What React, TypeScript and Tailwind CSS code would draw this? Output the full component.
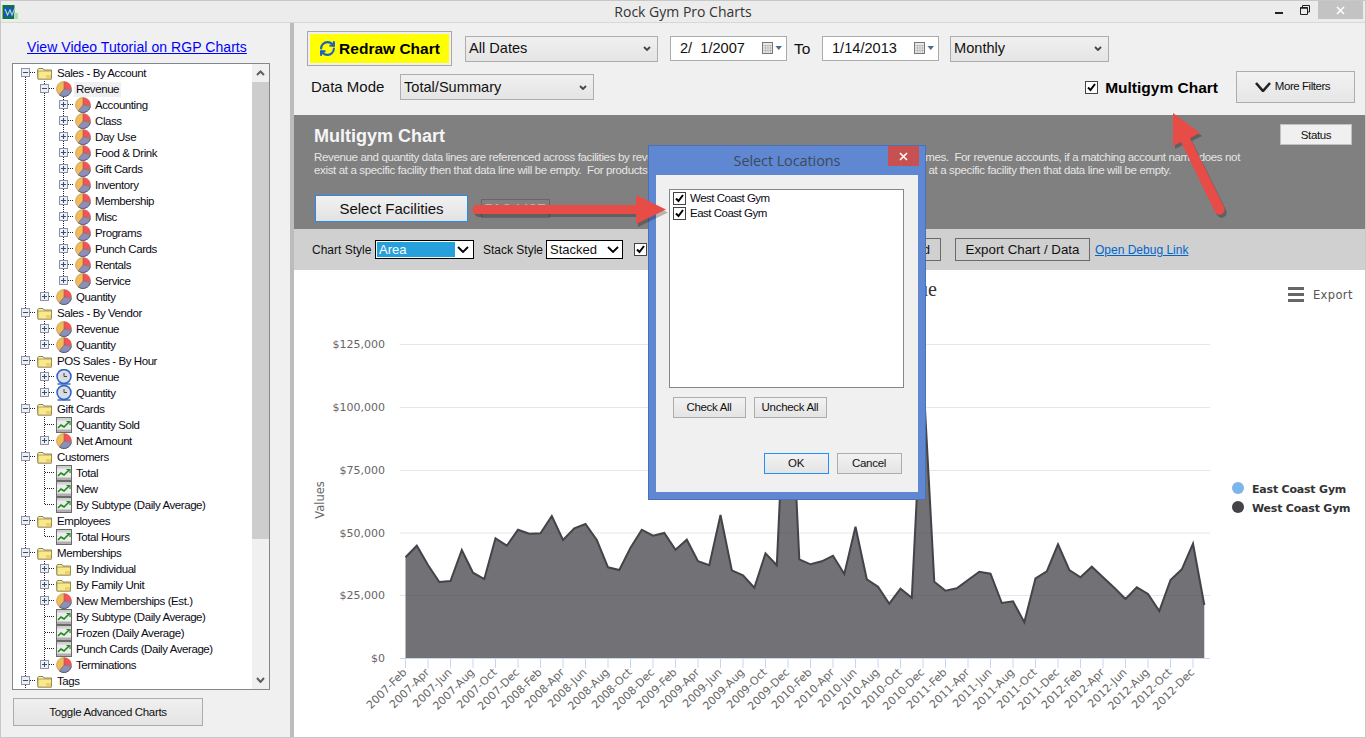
import React from "react";
import { RefreshCw } from "lucide-react";

const SANS = "font-['Liberation_Sans',Arial,sans-serif]";

type Kind = "folder" | "pie" | "clock" | "chart";
type Row = { d: number; k: Kind; t: string; e?: "+" | "-"; sel?: boolean };

const level2 = ["Accounting", "Class", "Day Use", "Food & Drink", "Gift Cards", "Inventory", "Membership", "Misc", "Programs", "Punch Cards", "Rentals", "Service"];

const rows: Row[] = [
  { d: 0, k: "folder", t: "Sales - By Account", e: "-" },
  { d: 1, k: "pie", t: "Revenue", e: "-", sel: true },
  ...level2.map((t): Row => ({ d: 2, k: "pie", t, e: "+" })),
  { d: 1, k: "pie", t: "Quantity", e: "+" },
  { d: 0, k: "folder", t: "Sales - By Vendor", e: "-" },
  { d: 1, k: "pie", t: "Revenue", e: "+" },
  { d: 1, k: "pie", t: "Quantity", e: "+" },
  { d: 0, k: "folder", t: "POS Sales - By Hour", e: "-" },
  { d: 1, k: "clock", t: "Revenue", e: "+" },
  { d: 1, k: "clock", t: "Quantity", e: "+" },
  { d: 0, k: "folder", t: "Gift Cards", e: "-" },
  { d: 1, k: "chart", t: "Quantity Sold" },
  { d: 1, k: "pie", t: "Net Amount", e: "+" },
  { d: 0, k: "folder", t: "Customers", e: "-" },
  { d: 1, k: "chart", t: "Total" },
  { d: 1, k: "chart", t: "New" },
  { d: 1, k: "chart", t: "By Subtype (Daily Average)" },
  { d: 0, k: "folder", t: "Employees", e: "-" },
  { d: 1, k: "chart", t: "Total Hours" },
  { d: 0, k: "folder", t: "Memberships", e: "-" },
  { d: 1, k: "folder", t: "By Individual", e: "+" },
  { d: 1, k: "folder", t: "By Family Unit", e: "+" },
  { d: 1, k: "pie", t: "New Memberships (Est.)", e: "+" },
  { d: 1, k: "chart", t: "By Subtype (Daily Average)" },
  { d: 1, k: "chart", t: "Frozen (Daily Average)" },
  { d: 1, k: "chart", t: "Punch Cards (Daily Average)" },
  { d: 1, k: "pie", t: "Terminations", e: "+" },
  { d: 0, k: "folder", t: "Tags", e: "-" },
];

function hasLater(i: number, level: number) {
  if (level === 0) return true;
  for (let j = i + 1; j < rows.length; j++) {
    if (rows[j].d < level) return false;
    if (rows[j].d === level) return true;
  }
  return false;
}

function Guide({ vTop, vBottom, h, e }: { vTop: boolean; vBottom: boolean; h?: boolean; e?: "+" | "-" }) {
  return (
    <svg width="19" height="16" className="shrink-0 block">
      {vTop && <line x1="9.5" y1="0" x2="9.5" y2="8" stroke="#222" strokeDasharray="1 1" />}
      {vBottom && <line x1="9.5" y1="8" x2="9.5" y2="16" stroke="#222" strokeDasharray="1 1" />}
      {h && <line x1="10" y1="7.5" x2="21" y2="7.5" stroke="#222" strokeDasharray="1 1" />}
      {e && (
        <g>
          <rect x="5.5" y="3.5" width="8" height="8" fill="#eef0f5" stroke="#8a94a6" />
          <line x1="7" y1="7.5" x2="12" y2="7.5" stroke="#3b4a7a" />
          {e === "+" && <line x1="9.5" y1="5" x2="9.5" y2="10" stroke="#3b4a7a" />}
        </g>
      )}
    </svg>
  );
}

function TreeIcon({ k }: { k: Kind }) {
  if (k === "pie")
    return (
      <svg width="16" height="16" viewBox="0 0 16 16" className="shrink-0 block">
        <circle cx="8" cy="8" r="7.5" fill="#f4bc58" stroke="#9a7a3a" strokeWidth="0.5" />
        <path d="M8 8 L8 0.5 A7.5 7.5 0 0 1 15.5 9 Z" fill="#f2545c" />
        <path d="M8 8 L15.5 9 A7.5 7.5 0 0 1 3.2 13.8 Z" fill="#8a90bc" />
        <path d="M15.3 9.5 A7.5 7.5 0 0 1 3.2 13.8" fill="none" stroke="#50506a" strokeWidth="0.9" />
        <path d="M8 1 V8 L15 9 M8 8 L3.4 13.6" stroke="#7a5a40" strokeWidth="0.5" fill="none" />
      </svg>
    );
  if (k === "folder")
    return (
      <svg width="16" height="16" viewBox="0 0 16 16" className="shrink-0 block">
        <path d="M0.5 5 L1.5 3.5 H6 L7 5 H14.5 V14 H1 Z" fill="#fbf4a0" stroke="#6f6a3c" strokeWidth="0.8" />
        <rect x="1" y="6" width="13.5" height="8" fill="#f9e98a" stroke="#7d7440" strokeWidth="0.6" />
        <rect x="9" y="10" width="5" height="4" fill="#e8c060" opacity="0.6" />
      </svg>
    );
  if (k === "clock")
    return (
      <svg width="16" height="16" viewBox="0 0 16 16" className="shrink-0 block">
        <path d="M1.5 15 H14.5" stroke="#2a62c8" strokeWidth="1.4" />
        <circle cx="8" cy="7.5" r="7" fill="#c9ced8" stroke="#2a62c8" strokeWidth="1.5" />
        <circle cx="8" cy="7.5" r="5" fill="#d8dce2" stroke="#eef0f4" strokeWidth="0.6" />
        <path d="M8 4 V7.5 H11" stroke="#444" strokeWidth="1" fill="none" />
      </svg>
    );
  return (
    <svg width="16" height="16" viewBox="0 0 16 16" className="shrink-0 block">
      <rect x="0.5" y="0.5" width="15" height="15" fill="#ececec" stroke="#6a6a6a" />
      <rect x="1" y="1" width="14" height="2.5" fill="#cfcfcf" />
      <path d="M2 11 L5 8 L8 10 L13 5" stroke="#1c8a1c" strokeWidth="1.6" fill="none" />
      <path d="M10.5 4.5 H14 V8" stroke="#1c8a1c" strokeWidth="1.2" fill="none" />
      <rect x="1" y="12.5" width="14" height="2.5" fill="#b0b0b0" />
    </svg>
  );
}

function TreeRow({ r, i }: { r: Row; i: number }) {
  const guides = [];
  for (let l = 0; l < r.d; l++) {
    const on = hasLater(i, l);
    guides.push(<Guide key={l} vTop={on} vBottom={on} />);
  }
  return (
    <div className="flex items-center h-4 shrink-0">
      {guides}
      <Guide vTop={i > 0} vBottom={hasLater(i, r.d)} h e={r.e} />
      <div className="w-[2px] shrink-0" />
      <TreeIcon k={r.k} />
      <span className={`ml-[2px] px-[2px] h-[15px] leading-[15px] whitespace-nowrap text-[11.5px] text-[#0a0a14] tracking-[-0.42px] ${r.sel ? "bg-[#f0f0f0]" : ""}`}>{r.t}</span>
    </div>
  );
}

function Chevron({ w = 8, h = 5, sw = 1.8, c = "#444" }: { w?: number; h?: number; sw?: number; c?: string }) {
  return (
    <svg width={w} height={h} viewBox={`0 0 ${w} ${h}`} className="block shrink-0">
      <polyline points={`1,1 ${w / 2},${h - 1} ${w - 1},1`} fill="none" stroke={c} strokeWidth={sw} />
    </svg>
  );
}

function WinSelect({ label, className }: { label: string; className: string }) {
  return (
    <div className={`flex items-center justify-between h-[26px] pl-[3px] pr-[6px] border border-[#adadad] bg-linear-to-b from-[#f0f0f0] to-[#e4e4e4] text-[14.6px] text-[#111] shrink-0 ${className}`}>
      <span className="pt-[1px]">{label}</span>
      <Chevron />
    </div>
  );
}

function DateBox({ label }: { label: string }) {
  return (
    <div className="flex items-center justify-between w-[117px] h-[25px] pl-[9px] pr-[3px] border border-[#ababab] bg-white text-[14.6px] text-[#111] shrink-0 whitespace-pre">
      <span className="pt-[1px]">{label}</span>
      <svg width="21" height="13" viewBox="0 0 21 13" className="block shrink-0">
        <rect x="0.5" y="0.5" width="10" height="11" fill="#e8e8e8" stroke="#777" />
        <path d="M1 3.5H10M1 6H10M1 8.5H10M3.5 3V11M6 3V11M8.5 3V11" stroke="#aaa" strokeWidth="0.6" />
        <path d="M13.5 4 H20 L16.75 8 Z" fill="#4a6a96" />
      </svg>
    </div>
  );
}

function Check({ className = "" }: { className?: string }) {
  return (
    <div className={`w-[13px] h-[13px] border border-[#444] bg-white flex items-center justify-center shrink-0 ${className}`}>
      <svg width="11" height="11" viewBox="0 0 11 11" className="block">
        <path d="M2 5.5 L4.5 8 L9 2" fill="none" stroke="#000" strokeWidth="2" />
      </svg>
    </div>
  );
}

function SmallBtn({ label, className }: { label: string; className: string }) {
  return (
    <div className={`flex items-center justify-center h-[21px] pt-[1px] pr-[1px] border border-[#adadad] bg-linear-to-b from-[#f2f2f2] to-[#e4e4e4] text-[11.5px] text-[#111] tracking-[-0.3px] shrink-0 ${className}`}>
      {label}
    </div>
  );
}

const ys = [557.3, 545.7, 565, 582, 581, 550, 572.7, 579, 538.3, 545.7, 529.7, 533.7, 533.3, 516, 540, 528.3, 524, 540, 567.3, 570, 547.7, 529.7, 535.7, 533, 549.7, 539.7, 561.3, 565.3, 515, 570.3, 575.3, 587.7, 553.3, 565.3, 320, 559.3, 564.3, 561.3, 555.7, 574, 526.7, 579.3, 586.7, 603.7, 588.7, 597.7, 372, 581.7, 590.7, 588.3, 580, 571.7, 573.7, 603, 601.3, 622.3, 578.3, 571.3, 544.3, 570, 577.3, 566.7, 577.3, 587.7, 599, 587.3, 594, 611, 580, 569.3, 543.7, 605];

const xAt = (i: number) => 405.5 + i * 11.25;
const linePts = ys.map((y, i) => `${xAt(i).toFixed(1)},${y}`).join(" ");
const yearsLabels: string[] = [];
for (let y = 2007; y <= 2012; y++) for (const m of ["Feb", "Apr", "Jun", "Aug", "Oct", "Dec"]) yearsLabels.push(`${y}-${m}`);
const grid = [
  { y: 344, t: "$125,000" },
  { y: 407, t: "$100,000" },
  { y: 470, t: "$75,000" },
  { y: 532.5, t: "$50,000" },
  { y: 595, t: "$25,000" },
];
const CHART_FONT = "'DejaVu Sans', sans-serif";

function Chart() {
  return (
    <svg viewBox="294 270 1071 467" className="w-[1071px] h-[467px] block" fontFamily={CHART_FONT}>
      <text x="937" y="296" textAnchor="end" fontSize="20" fill="#333" fontFamily="'Liberation Serif', serif">Revenue</text>
      {grid.map((g) => (
        <g key={g.t}>
          <line x1="400" x2="1210" y1={g.y + 0.5} y2={g.y + 0.5} stroke="#e6e6e6" />
          <text x="385" y={g.y + 4} textAnchor="end" fontSize="11" fill="#666">{g.t}</text>
        </g>
      ))}
      <text x="385" y="662" textAnchor="end" fontSize="11" fill="#666">$0</text>
      <text transform="translate(324 500) rotate(-90)" textAnchor="middle" fontSize="11.5" fill="#666">Values</text>
      <polygon points={`405.5,658 ${linePts} ${xAt(71)},658`} fill="#434348" fillOpacity="0.75" />
      <polyline points={linePts} fill="none" stroke="#434348" strokeWidth="2" />
      <line x1="400" x2="1210" y1="658.5" y2="658.5" stroke="#ccd6eb" />
      {yearsLabels.map((l, i) => {
        const x = xAt(i * 2);
        return (
          <g key={l}>
            <line x1={x} x2={x} y1="658" y2="668" stroke="#ccd6eb" />
            <text transform={`translate(${x + 2} 673) rotate(-45)`} textAnchor="end" fontSize="11" fill="#666">{l}</text>
          </g>
        );
      })}
      <path d="M1288 288.5H1304M1288 294.5H1304M1288 300.5H1304" stroke="#666" strokeWidth="3" />
      <text x="1313" y="299" fontSize="11.5" fill="#555" letterSpacing="0.35">Export</text>
      <circle cx="1238" cy="488" r="6" fill="#7cb5ec" />
      <text x="1252" y="493" fontSize="11" fontWeight="bold" fill="#333" letterSpacing="-0.2">East Coast Gym</text>
      <circle cx="1238" cy="507" r="6" fill="#434348" />
      <text x="1252" y="512" fontSize="11" fontWeight="bold" fill="#333" letterSpacing="-0.2">West Coast Gym</text>
    </svg>
  );
}

function Dialog() {
  return (
    <div className="absolute left-[647px] top-[144px] w-[278px] h-[355px] bg-[#5f87d2] border border-[#4a70b8] flex flex-col px-[7px] pb-[7px]">
      <div className="h-[29px] flex items-start justify-center relative shrink-0">
        <span className="text-[14.5px] leading-[29px] text-[#3c4a60] font-['Open_Sans',sans-serif] tracking-[-0.1px]">Select Locations</span>
        <div className="absolute right-[-1px] top-0 w-[31px] h-[20px] bg-[#c75050] flex items-center justify-center">
          <svg width="9" height="9" viewBox="0 0 9 9" className="block">
            <path d="M1 1L8 8M8 1L1 8" stroke="#fff" strokeWidth="1.6" />
          </svg>
        </div>
      </div>
      <div className="flex-1 bg-[#f0f0f0] flex flex-col pt-[14px] pl-[13px] pr-[14px]">
        <div className="w-[235px] h-[199px] border border-[#828790] bg-white pt-[1px] pl-[3px] shrink-0">
          {["West Coast Gym", "East Coast Gym"].map((t) => (
            <div key={t} className="flex items-center h-[15px]">
              <Check />
              <span className="ml-[4px] text-[11.5px] text-[#0a0a14] tracking-[-0.5px] whitespace-nowrap">{t}</span>
            </div>
          ))}
        </div>
        <div className="flex gap-[8px] mt-[9px] ml-[4px]">
          <SmallBtn label="Check All" className="w-[73px]" />
          <SmallBtn label="Uncheck All" className="w-[73px]" />
        </div>
        <div className="flex gap-[8px] mt-[35px] ml-[95px]">
          <SmallBtn label="OK" className="w-[65px] !border-[#1e90ff]" />
          <SmallBtn label="Cancel" className="w-[65px]" />
        </div>
      </div>
    </div>
  );
}

function Arrows() {
  return (
    <svg viewBox="0 0 1366 738" className="absolute left-[-1px] top-[-1px] w-[1366px] h-[738px] pointer-events-none">
      <g opacity="0.25" transform="translate(2 3)" fill="#000">
        <path d="M477 205 H636 V195 L666 209.5 L636 224 V214 H477 A4.5 4.5 0 0 1 477 205 Z" />
        <path d="M1173 113 L1200 133 L1190 138 L1224 207 A5 5 0 0 1 1215 212 L1181 142 L1173 146 Z" />
      </g>
      <path d="M477 205 H636 V195 L666 209.5 L636 224 V214 H477 A4.5 4.5 0 0 1 477 205 Z" fill="#e84c46" />
      <path d="M1173 113 L1200 133 L1190 138 L1224 207 A5 5 0 0 1 1215 212 L1181 142 L1173 146 Z" fill="#e84c46" />
    </svg>
  );
}

export default function App() {
  return (
    <div className={`relative w-[1366px] h-[738px] overflow-hidden border border-[#c8c8c8] bg-[#f0f0f0] flex flex-col ${SANS}`}>
      <div className="h-[22px] shrink-0 bg-[#ececec] border-b border-[#d8d8d8] flex items-center relative">
        <svg width="16" height="16" viewBox="0 0 16 16" className="block ml-[1px] shrink-0">
          <rect x="0.5" y="1" width="12" height="14" fill="#0a7a2a" />
          <rect x="2" y="3" width="10" height="10" fill="#1a50c8" />
          <path d="M3 5 L5.5 11 L8 6 L10 11 L13 4" stroke="#9fe0a0" strokeWidth="1.2" fill="none" />
          <rect x="12" y="9" width="4" height="6" fill="#a8e0a8" />
        </svg>
        <div className="flex-1 text-center text-[14px] text-[#333] font-['Open_Sans',sans-serif] pr-[17px]">Rock Gym Pro Charts</div>
        <div className="absolute right-0 top-0 flex items-start">
          <div className="w-[26px] h-[18px] flex items-center justify-center">
            <div className="w-[8px] h-[2px] bg-[#222] mt-[5px]" />
          </div>
          <div className="w-[26px] h-[18px] flex items-center justify-center">
            <svg width="10" height="10" viewBox="0 0 10 10" className="block">
              <path d="M2.5 2.5V0.5H9.5V7H7.5M0.5 2.5H7.5V9.5H0.5Z" fill="none" stroke="#222" />
              <path d="M0.5 3H7.5" stroke="#222" strokeWidth="1.5" />
            </svg>
          </div>
          <div className="w-[45px] h-[18px] bg-[#c3c3c3] flex items-center justify-center mr-[2px]">
            <svg width="9" height="9" viewBox="0 0 9 9" className="block">
              <path d="M1 1L8 8M8 1L1 8" stroke="#fff" strokeWidth="1.6" />
            </svg>
          </div>
        </div>
      </div>

      <div className="flex-1 flex min-h-0">
        <aside className="w-[289px] shrink-0 flex flex-col pl-[11px]">
          <a className="mt-[15px] ml-[15px] h-[18px] leading-[18px] text-[14px] text-[#0000ff] underline whitespace-nowrap tracking-[0.06px]">View Video Tutorial on RGP Charts</a>
          <div className="mt-[7px] w-[258px] h-[627px] border border-[#828790] bg-white flex shrink-0 overflow-hidden">
            <div className="flex-1 pl-[3px] pt-[1px] flex flex-col overflow-hidden">
              {rows.map((r, i) => (
                <TreeRow key={i} r={r} i={i} />
              ))}
            </div>
            <div className="w-[17px] shrink-0 bg-[#f0f0f0] flex flex-col items-center">
              <div className="h-[18px] flex items-center justify-center"><svg width="9" height="6" viewBox="0 0 9 6" className="block"><polyline points="1,5 4.5,1.5 8,5" fill="none" stroke="#606060" strokeWidth="2" /></svg></div>
              <div className="w-full h-[457px] bg-[#cdcdcd]" />
              <div className="flex-1" />
              <div className="h-[18px] flex items-center justify-center"><Chevron w={9} h={6} sw={2} c="#606060" /></div>
            </div>
          </div>
          <div className="mt-[8px] ml-[1px] w-[190px] h-[28px] pt-[1px] border border-[#adadad] bg-linear-to-b from-[#f0f0f0] to-[#e4e4e4] flex items-center justify-center text-[11.5px] text-[#111] tracking-[-0.33px]">Toggle Advanced Charts</div>
        </aside>

        <div className="w-[4px] shrink-0 bg-[#bcbcbc]" />

        <main className="flex-1 flex flex-col min-w-0">
          <section className="h-[92px] shrink-0 pt-[8px] pl-[13px] pr-[10px] flex flex-col">
            <div className="flex items-center h-[35px]">
              <div className="w-[145px] h-[35px] border border-[#a8a8a8] p-[2px] shrink-0">
                <div className="w-full h-full bg-[#ffff00] flex items-center justify-center gap-[3px] text-[15.5px] font-bold text-black">
                  <RefreshCw size={17} strokeWidth={3} color="#1f5fc0" className="shrink-0" />
                  <span>Redraw Chart</span>
                </div>
              </div>
              <WinSelect label="All Dates" className="w-[193px] ml-[13px]" />
              <div className="ml-[12px]"><DateBox label="2/  1/2007" /></div>
              <span className="ml-[7px] w-[18px] text-[15.5px] text-[#111] pt-[1px]">To</span>
              <div className="ml-[10px]"><DateBox label="1/14/2013" /></div>
              <WinSelect label="Monthly" className="w-[159px] ml-[11px]" />
            </div>
            <div className="flex items-center h-[32px] mt-[5px]">
              <span className="ml-[4px] w-[89px] text-[15px] text-[#111] pt-[1px]">Data Mode</span>
              <WinSelect label="Total/Summary" className="w-[194px]" />
              <div className="flex-1" />
              <Check />
              <span className="ml-[7px] text-[15.5px] font-bold text-black pt-[1px]">Multigym Chart</span>
              <div className="ml-[18px] w-[119px] h-[32px] border border-[#adadad] bg-linear-to-b from-[#f2f2f2] to-[#e6e6e6] flex items-center justify-center gap-[4px] text-[11.5px] text-[#111] tracking-[-0.45px] pr-[6px]">
                <Chevron w={16} h={10} sw={2.6} c="#222" />
                <span>More Filters</span>
              </div>
            </div>
          </section>

          <section className="h-[114px] shrink-0 bg-[#808080] pt-[9px] pl-[20px] pr-[13px] flex flex-col">
            <div className="flex items-start justify-between">
              <span className="h-[22px] leading-[24px] text-[18px] font-bold text-[#f5f5f5]">Multigym Chart</span>
              <div className="w-[72px] h-[21px] bg-[#f0f0f0] border border-[#c0c0c0] flex items-center justify-center text-[11.5px] text-[#111] tracking-[-0.35px] pt-[2px]">Status</div>
            </div>
            <div className="mt-[5px] text-[11.5px] leading-[13px] text-[#e6e6e6] tracking-[-0.35px]">
              <div className="w-[926px] flex justify-between whitespace-pre">
                <span>Revenue and quantity data lines are referenced across facilities by revenue</span>
                <span>names.  For revenue accounts, if a matching account name does not</span>
              </div>
              <div className="w-[857px] flex justify-between whitespace-pre">
                <span>exist at a specific facility then that data line will be empty.  For products, if a</span>
                <span>at a specific facility then that data line will be empty.</span>
              </div>
            </div>
            <div className="flex items-center mt-[18px] ml-[1px]">
              <div className="w-[153px] h-[27px] pt-[1px] border border-[#2a8ae8] bg-linear-to-b from-[#f2f2f2] to-[#e2e2e2] flex items-center justify-center text-[15px] text-[#111]">Select Facilities</div>
              <div className="ml-[13px] w-[69px] h-[19px] border border-[#666] flex items-center justify-center text-[12px] font-bold text-[#b4b4b4] tracking-[1px] whitespace-nowrap">FAC LIST</div>
            </div>
          </section>

          <section className="h-[41px] shrink-0 bg-[#d0d0d0] flex items-center pl-[18px] text-[12px] text-[#111]">
            <span className="w-[59px] whitespace-nowrap">Chart Style</span>
            <div className="ml-[4px] w-[99px] h-[19px] border border-black bg-white p-[1px] flex items-center justify-between shrink-0">
              <span className="w-[78px] h-full bg-[#26a0da] text-white pl-[2px] leading-[15px] text-[13px]">Area</span>
              <Chevron w={12} h={7} sw={1.8} c="#000" />
              <span className="w-[1px]" />
            </div>
            <span className="ml-[9px] w-[59px] whitespace-nowrap">Stack Style</span>
            <div className="ml-[4px] w-[77px] h-[19px] border border-black bg-white pl-[3px] pr-[3px] flex items-center justify-between shrink-0 text-[13px]">
              <span>Stacked</span>
              <Chevron w={12} h={7} sw={1.8} c="#000" />
            </div>
            <Check className="ml-[11px]" />
            <div className="ml-[144px] w-[150px] h-[23px] border border-[#6a6a6a] flex items-center justify-end pr-[10px] shrink-0 text-[13px]">Toggle Legend</div>
            <div className="ml-[14px] w-[135px] h-[23px] border border-[#6a6a6a] flex items-center justify-center shrink-0 text-[13.3px] whitespace-nowrap">Export Chart / Data</div>
            <a className="ml-[5px] text-[12px] text-[#0066cc] underline whitespace-nowrap">Open Debug Link</a>
          </section>

          <section className="flex-1 bg-white min-h-0">
            <Chart />
          </section>
        </main>
      </div>

      <Dialog />
      <Arrows />
    </div>
  );
}
